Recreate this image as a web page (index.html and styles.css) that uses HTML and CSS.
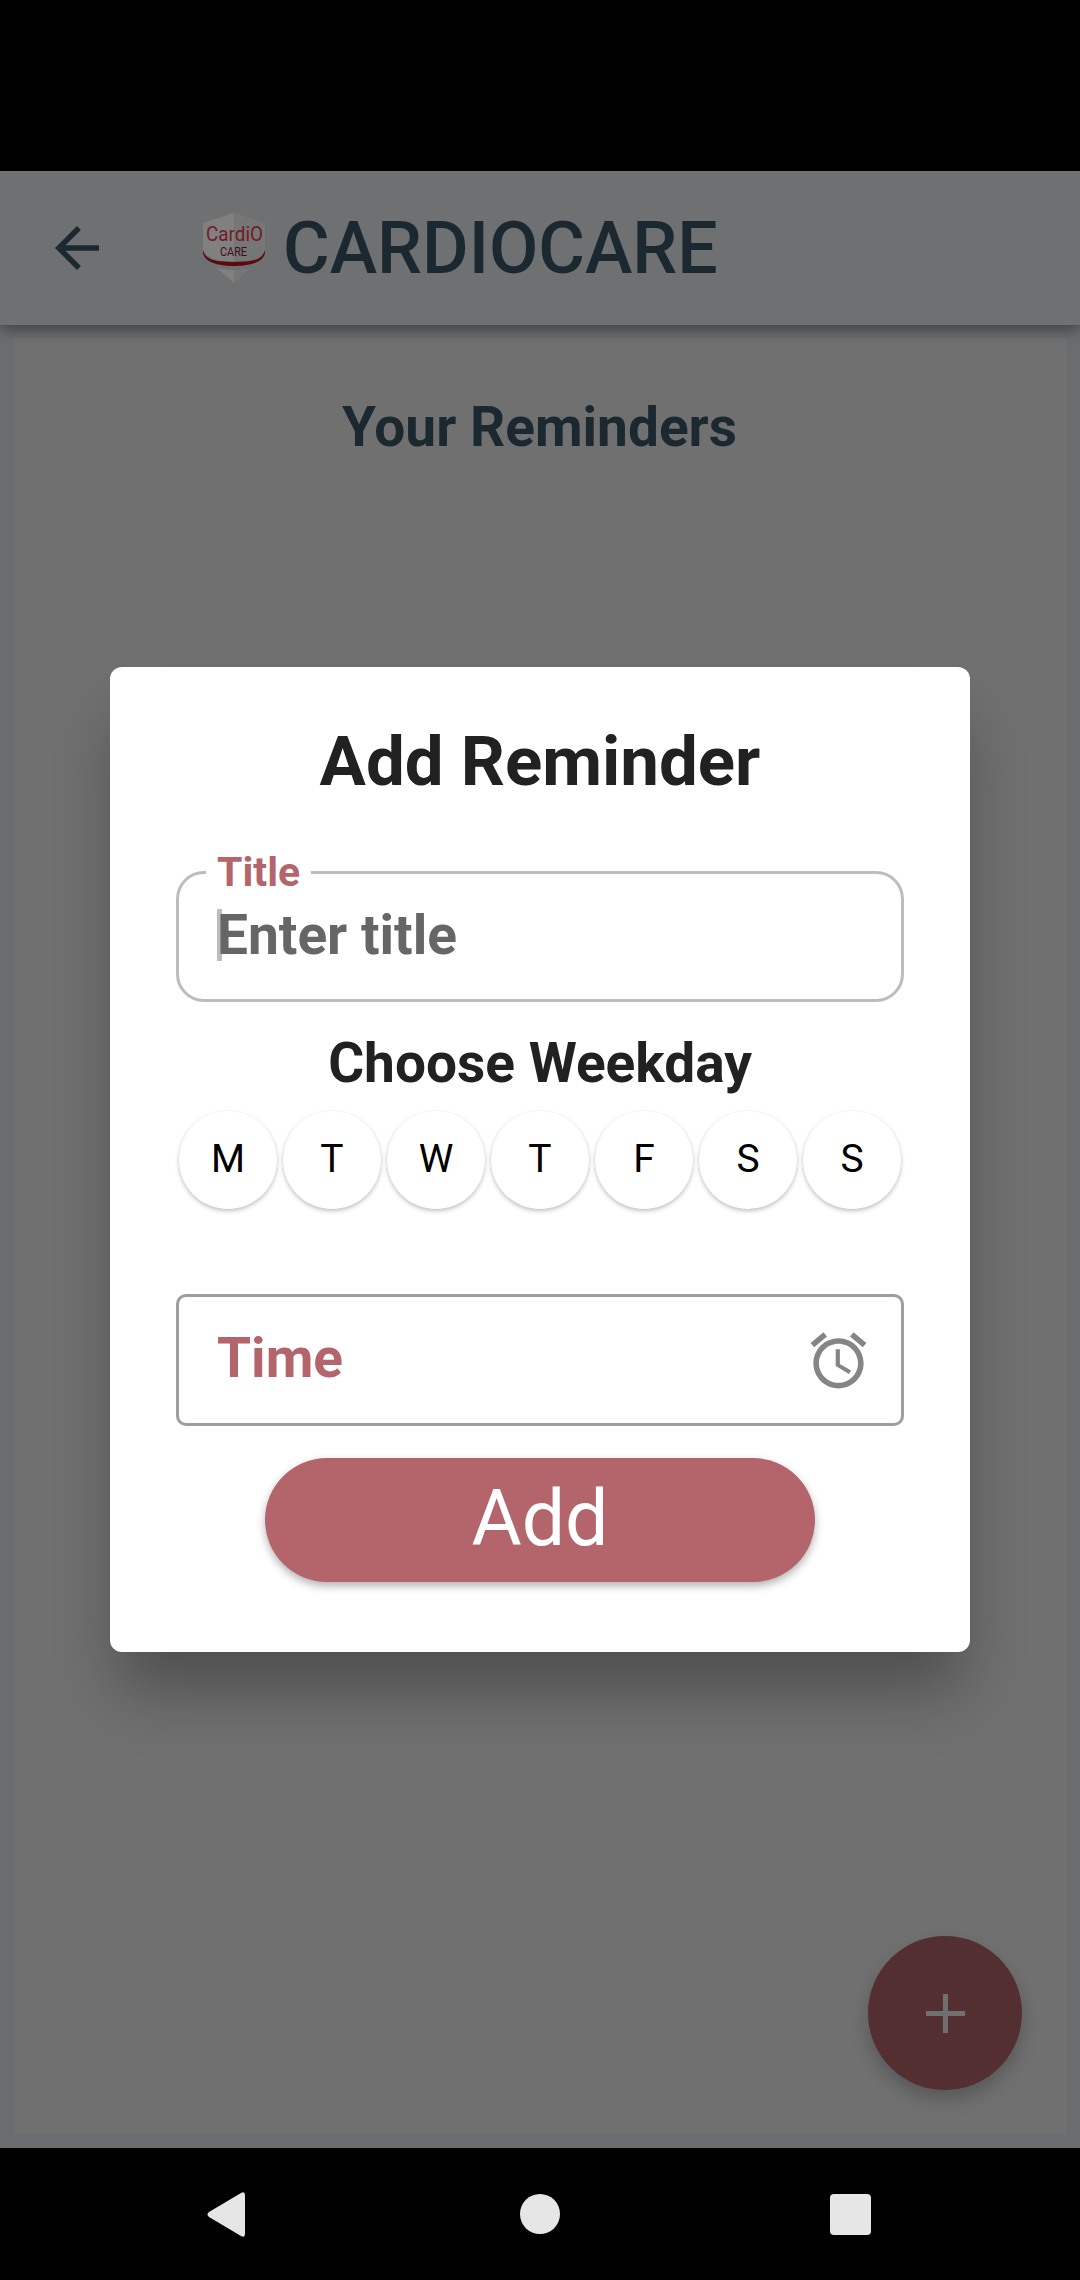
FILE: index.html
```html
<!DOCTYPE html>
<html lang="en">

<head>
    <meta charset="UTF-8">
    <meta name="viewport" content="width=device-width, initial-scale=1.0">
    <title>Cardiocare</title>
    <link rel="stylesheet" href="styles.css">
</head>

<body>
    <div class="status-bar"></div>

    <div class="app">
        <header class="app-bar">
            <svg class="back" viewBox="0 0 24 24"><path d="M20 11H7.83l5.59-5.59L12 4l-8 8 8 8 1.41-1.41L7.83 13H20v-2z"/></svg>
            <svg class="logo" viewBox="0 0 62 70">
                <path class="logo-l" d="M31 0 L0 10 V37 C3 46 20 49 31 49 Z"/>
                <path class="logo-r" d="M31 0 L62 10 V37 C59 46 42 49 31 49 Z"/>
                <path class="logo-l" d="M14 55 Q24 57 31 57 V70 Z"/>
                <path class="logo-r" d="M48 55 Q38 57 31 57 V70 Z"/>
                <path class="logo-band" d="M0 37 C3 50 20 48 31 49 C42 48 59 50 62 37 V40 C60 51 42 53 31 53 C20 53 2 51 0 40 Z"/>
                <text class="logo-big" x="3" y="28" textLength="57" lengthAdjust="spacingAndGlyphs">CardiO</text>
                <text class="logo-small" x="17" y="43" textLength="27" lengthAdjust="spacingAndGlyphs">CARE</text>
            </svg>
            <span class="brand">CARDIOCARE</span>
        </header>

        <main class="content">
            <h1 class="page-title">Your Reminders</h1>
        </main>

        <!-- floating add button -->
        <div class="fab">
            <svg viewBox="0 0 39 39"><path d="M17 0h5v17h17v5H22v17h-5V22H0v-5h17z"/></svg>
        </div>

        <!-- dialog -->
        <div class="overlay">
            <div class="dialog">
                <h2 class="dialog-title">Add Reminder</h2>

                <div class="field">
                    <span class="field-label">Title</span>
                    <span class="caret"></span>
                    <span class="placeholder">Enter title</span>
                </div>

                <h3 class="weekday-title">Choose Weekday</h3>
                <ul class="weekdays">
                    <li>M</li>
                    <li>T</li>
                    <li>W</li>
                    <li>T</li>
                    <li>F</li>
                    <li>S</li>
                    <li>S</li>
                </ul>

                <div class="time-field">
                    <span class="time-label">Time</span>
                    <svg class="alarm" viewBox="0 0 24 24"><path d="M22 5.72l-4.6-3.86-1.29 1.53 4.6 3.86L22 5.72zM7.88 3.39L6.6 1.86 2 5.71l1.29 1.53 4.59-3.85zM12.5 8H11v6l4.75 2.85.75-1.23-4-2.37V8zM12 4c-4.97 0-9 4.03-9 9s4.03 9 9 9 9-4.03 9-9-4.03-9-9-9zm0 16c-3.87 0-7-3.13-7-7s3.13-7 7-7 7 3.13 7 7-3.13 7-7 7z"/></svg>
                </div>

                <div class="add-btn">Add</div>
            </div>
        </div>
    </div>

    <nav class="nav-bar">
        <svg class="nav-back" viewBox="0 0 38 45"><path d="M34 1 Q38 -1 38 3 V42 Q38 46 34 44 L2 25 Q-1 22.500 2 20 Z"/></svg>
        <span class="nav-home"></span>
        <span class="nav-recent"></span>
    </nav>
</body>

</html>
```

FILE: styles.css
```css
* {
    margin: 0;
    padding: 0;
    box-sizing: border-box;
}

li {
    list-style: none;
}

body {
    display: flex;
    flex-direction: column;
    width: 1080px;
    height: 2280px;
    overflow: hidden;
    background: #000;
    font-family: Roboto, "Liberation Sans", sans-serif;
}

.status-bar {
    flex: none;
    height: 171px;
    background: #000;
}

.app {
    position: relative;
    flex: 1;
    display: flex;
    flex-direction: column;
    background: #6a6d70;
}

.app-bar {
    flex: none;
    display: flex;
    align-items: center;
    height: 154px;
    padding-left: 44px;
    background: #6e7072;
    box-shadow: 0 6px 12px rgba(0, 0, 0, .35);
    position: relative;
}

.back {
    width: 66px;
    height: 66px;
    fill: #1c2830;
}

.logo {
    width: 62px;
    height: 70px;
    margin-left: 93px;
}

.logo-l {
    fill: #808080;
}

.logo-r {
    fill: #767676;
}

.logo-band {
    fill: #5c0a10;
}

.logo-big {
    font-size: 20px;
    fill: #741a22;
}

.logo-small {
    font-size: 13px;
    fill: #3c0f18;
}

.brand {
    margin-left: 18px;
    font-size: 71.5px;
    font-weight: 500;
    color: #1c2830;
}

.content {
    flex: 1;
    margin: 13px 13px 14px 14px;
    padding-right: 2px;
    background: #707070;
}

.page-title {
    margin-top: 54px;
    font-size: 55px;
    font-weight: 700;
    line-height: 70px;
    text-align: center;
    color: #1c2830;
}

.fab {
    position: absolute;
    right: 58px;
    bottom: 58px;
    display: flex;
    align-items: center;
    justify-content: center;
    width: 154px;
    height: 154px;
    border-radius: 50%;
    background: #532f32;
    box-shadow: 0 9px 18px rgba(0, 0, 0, .22);
}

.fab svg {
    width: 39px;
    height: 39px;
    fill: #707070;
}

.overlay {
    position: absolute;
    top: 0;
    left: 0;
    right: 0;
    bottom: 0;
    display: flex;
    align-items: center;
    justify-content: center;
}

.dialog {
    display: flex;
    flex-direction: column;
    align-items: center;
    width: 860px;
    height: 985px;
    padding: 0 66px;
    background: #fff;
    border-radius: 12px;
    box-shadow: 0 46px 64px -8px rgba(0, 0, 0, .3);
}

.dialog-title {
    margin-top: 50px;
    font-size: 69px;
    font-weight: 700;
    line-height: 90px;
    color: #212121;
}

.field {
    position: relative;
    display: flex;
    align-items: center;
    width: 100%;
    height: 131px;
    margin-top: 64px;
    padding-left: 38px;
    border: 3px solid #bdbdbd;
    border-radius: 28px;
}

.field-label {
    position: absolute;
    top: -25px;
    left: 27px;
    padding: 0 11px;
    background: #fff;
    font-size: 41px;
    font-weight: 700;
    line-height: 46px;
    color: #b4646b;
}

.caret {
    width: 5px;
    height: 52px;
    margin-top: -4px;
    background: #bdbdbd;
}

.placeholder {
    margin-top: -4px;
    margin-left: -5px;
    font-size: 55px;
    font-weight: 700;
    color: #666;
}

.weekday-title {
    margin-top: 26px;
    font-size: 55px;
    font-weight: 700;
    line-height: 70px;
    color: #212121;
}

.weekdays {
    display: flex;
    gap: 6px;
    margin-top: 13px;
}

.weekdays li {
    width: 98px;
    height: 98px;
    border-radius: 50%;
    background: #fff;
    box-shadow: 0 2px 4px rgba(0, 0, 0, .25);
    font-size: 39px;
    line-height: 96px;
    text-align: center;
    color: #000;
}

.time-field {
    display: flex;
    align-items: center;
    justify-content: space-between;
    width: 100%;
    height: 132px;
    margin-top: 85px;
    padding: 0 29px 0 38px;
    border: 3px solid #9e9e9e;
    border-radius: 10px;
}

.time-label {
    margin-top: -4px;
    font-size: 55px;
    font-weight: 700;
    color: #b4646b;
}

.alarm {
    width: 67px;
    height: 67px;
    fill: #858585;
}

.add-btn {
    width: 550px;
    height: 124px;
    margin-top: 32px;
    border-radius: 62px;
    background: #b4646b;
    box-shadow: 0 4px 8px rgba(0, 0, 0, .3);
    font-size: 77px;
    line-height: 122px;
    text-align: center;
    color: #fff;
}

.nav-bar {
    flex: none;
    display: flex;
    align-items: center;
    height: 132px;
    background: #000;
    position: relative;
}

.nav-back {
    width: 38px;
    height: 45px;
    margin-left: 207px;
    fill: #e6e6e6;
}

.nav-home {
    width: 40px;
    height: 40px;
    margin-left: 275px;
    border-radius: 50%;
    background: #e6e6e6;
}

.nav-recent {
    width: 41px;
    height: 41px;
    margin-left: 270px;
    border-radius: 4px;
    background: #e6e6e6;
}
```
